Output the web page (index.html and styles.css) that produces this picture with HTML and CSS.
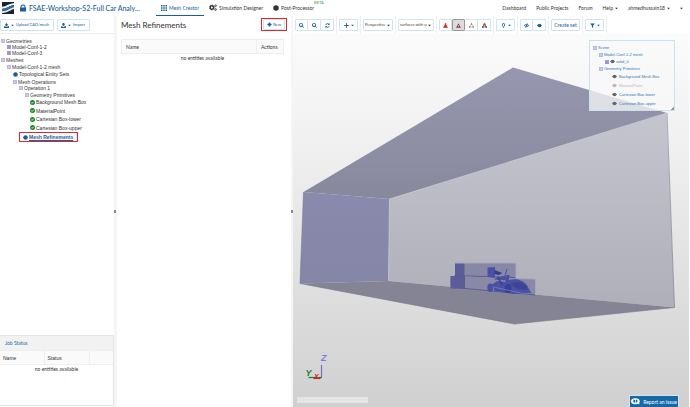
FILE: index.html
```html
<!DOCTYPE html>
<html lang="en">
<head>
<meta charset="utf-8">
<title>FSAE-Workshop-S2-Full Car Analysis</title>
<link rel="stylesheet" href="styles.css">
</head>
<body>
<svg class="symbols" aria-hidden="true">
  <symbol id="upload" viewBox="0 0 12 12"><path d="M6 0l4 5H8v3H4V5H2zM0 8h3v1h6V8h3v4H0z"/></symbol>
  <symbol id="download" viewBox="0 0 12 12"><path d="M4 0h4v3h2L6 8 2 3h2zM0 8h3l3 2 3-2h3v4H0z"/></symbol>
  <symbol id="magnify" viewBox="0 0 12 12"><path fill-rule="evenodd" d="M5 0a5 5 0 0 1 4 8l3 3-1 1-3-3A5 5 0 1 1 5 0zm0 2a3 3 0 1 0 0 6 3 3 0 0 0 0-6z"/><path d="M3 4.500h4v1H3z"/></symbol>
  <symbol id="refresh" viewBox="0 0 12 12"><path d="M1 5a5 5 0 0 1 8-3l2-2v5H6l2-2a3 3 0 0 0-5 2zM11 7a5 5 0 0 1-8 3l-2 2V7h5L4 9a3 3 0 0 0 5-2z"/></symbol>
  <symbol id="move" viewBox="0 0 12 12"><path d="M6 0l2 2H7v3h3V4l2 2-2 2V7H7v3h1l-2 2-2-2h1V7H2v1L0 6l2-2v1h3V2H4z"/></symbol>
  <symbol id="plus" viewBox="0 0 12 12"><path d="M4 1h4v3h3v4H8v3H4V8H1V4h3z"/></symbol>
  <symbol id="caret" viewBox="0 0 12 12"><path d="M0 3h12L6 9z"/></symbol>
  <symbol id="eye" viewBox="0 0 12 12"><path d="M0 6q6-8 12 0-6 8-12 0z"/><circle cx="6" cy="6" r="3"/></symbol>
  <symbol id="eye-off" viewBox="0 0 12 12"><path fill-rule="evenodd" d="M0 6q6-8 12 0-6 8-12 0zm2 0q4 5 8 0-4-5-8 0z"/><circle cx="6" cy="6" r="2"/><path d="M9 0h1L4 12H3z"/></symbol>
  <symbol id="bulb" viewBox="0 0 12 12"><path fill-rule="evenodd" d="M6 0a5 4.500 0 0 1 2 8v1H4V8a5 4.500 0 0 1 2-8zm0 1.500a3 3 0 0 0-1 5v1h2v-1a3 3 0 0 0-1-5zM4 10h4l-1 2H5z"/></symbol>
  <symbol id="filter" viewBox="0 0 12 12"><path d="M0 1h12L7.500 6v6l-3-2V6z"/></symbol>
  <symbol id="lock" viewBox="0 0 12 14"><path fill-rule="evenodd" d="M1 6V5a5 5 0 0 1 10 0v1h1v8H0V6zm2 0h6V5a3 3 0 0 0-6 0z"/></symbol>
  <symbol id="grid" viewBox="0 0 12 12"><path d="M0 0h3v3H0zM4.500 0h3v3h-3zM9 0h3v3H9zM0 4.500h3v3H0zM4.500 4.500h3v3h-3zM9 4.500h3v3H9zM0 9h3v3H0zM4.500 9h3v3h-3zM9 9h3v3H9z"/></symbol>
  <symbol id="gears" viewBox="0 0 14 12"><g fill="none" stroke="currentColor"><circle cx="5" cy="6" r="3" stroke-width="2.500"/><circle cx="5" cy="6" r="4.500" stroke-dasharray="2 1.500"/><circle cx="11.500" cy="3" r="1.500" stroke-width="1.500"/><circle cx="11.500" cy="9.500" r="1.500" stroke-width="1.500"/></g></symbol>
  <symbol id="dot" viewBox="0 0 12 12"><circle cx="6" cy="6" r="5.500"/></symbol>
  <symbol id="check" viewBox="0 0 12 12"><circle cx="6" cy="6" r="6"/><path d="M3 6l2 2 4-4" fill="none" stroke="#fff" stroke-width="2"/></symbol>
  <symbol id="minus-box" viewBox="0 0 12 12"><path d="M1 1h10v10H1zM3 6h6" fill="#eeeefb" stroke="#8a8dcc" stroke-width="2"/></symbol>
  <symbol id="plus-box" viewBox="0 0 12 12"><path d="M1 1h10v10H1zM3 6h6M6 3v6" fill="#dcdcf8" stroke="#5f62c6" stroke-width="2"/></symbol>
  <symbol id="tri" viewBox="0 0 14 12"><path d="M7 0l3 5H4z" fill="#444"/><path d="M4 5h6l4 7H0z" fill="#a33b3b"/><path d="M6 5h2v4H6z" fill="#eee"/></symbol>
  <symbol id="tri-red" viewBox="0 0 14 12"><path d="M5 0h4v4l5 8H0l5-8z" fill="#cf2525"/></symbol>
  <symbol id="tri-line" viewBox="0 0 14 12"><path d="M7 1l5 9H2z" fill="none" stroke="#999" stroke-width="1.500"/><circle cx="7" cy="2" r="2" fill="#c44"/><circle cx="2" cy="10" r="2" fill="#666"/><circle cx="12" cy="10" r="2" fill="#c44"/></symbol>
  <symbol id="tri-points" viewBox="0 0 14 12"><path d="M7 1l5 9H2z" fill="none" stroke="#444" stroke-width="2"/><circle cx="7" cy="3" r="3" fill="#d22"/><path d="M0 8h4v4H0zM10 8h4v4h-4z" fill="#444"/></symbol>
</svg>

<header class="topbar">
  <a class="brand" href="#" aria-label="Home">
    <svg class="logo" viewBox="0 0 36 36"><path d="M0 0h36v36H0z" fill="#17242f"/><path d="M0 14C12 15 18 5 36 4v5C22 10 16 20 0 20z" fill="#fff"/><path d="M0 21C14 21 20 12 36 10v5C24 17 18 26 0 27z" fill="#2b74b0"/><path d="M0 28C16 28 24 18 36 16v5C26 23 20 32 0 33z" fill="#e8edf1"/></svg>
  </a>
  <svg class="lock"><use href="#lock"/></svg>
  <h1 class="project">FSAE-Workshop-S2-Full Car Analy...</h1>
  <nav class="tabs">
    <a class="tab active" href="#"><svg class="icon m"><use href="#grid"/></svg>Mesh Creator</a>
    <a class="tab" href="#"><svg class="icon l"><use href="#gears"/></svg>Simulation Designer</a>
    <a class="tab" href="#"><svg class="icon m"><use href="#dot"/></svg>Post-Processor<sup class="beta">BETA</sup></a>
  </nav>
  <nav class="links">
    <a href="#">Dashboard</a><a href="#">Public Projects</a><a href="#">Forum</a>
    <a href="#">Help <svg class="icon c"><use href="#caret"/></svg></a>
    <a href="#">ahmedhussain18 <svg class="icon c"><use href="#caret"/></svg></a>
    <a href="#" aria-label="More"><svg class="icon c"><use href="#caret"/></svg></a>
  </nav>
</header>

<main class="workspace">
  <aside class="sidebar">
    <div class="actions">
      <button class="btn"><svg class="icon s"><use href="#upload"/></svg><svg class="icon c"><use href="#caret"/></svg>Upload CAD/mesh</button>
      <button class="btn"><svg class="icon s"><use href="#download"/></svg><svg class="icon c"><use href="#caret"/></svg>Import</button>
    </div>
    <ul class="tree">
      <li><div class="node"><svg class="icon t"><use href="#minus-box"/></svg>Geometries</div>
        <ul>
          <li class="node small"><svg class="icon t"><use href="#plus-box"/></svg>Model-Conf-1-2</li>
          <li class="node small"><svg class="icon t"><use href="#plus-box"/></svg>Model-Conf-3</li>
        </ul></li>
      <li><div class="node"><svg class="icon t"><use href="#minus-box"/></svg>Meshes</div>
        <ul>
          <li><div class="node"><svg class="icon t"><use href="#minus-box"/></svg>Model-Conf-1-2 mesh</div>
            <ul>
              <li class="node leaf blue"><svg class="icon s"><use href="#dot"/></svg><span>Topological Entity Sets</span></li>
              <li><div class="node"><svg class="icon t"><use href="#minus-box"/></svg>Mesh Operations</div>
                <ul>
                  <li><div class="node small"><svg class="icon t"><use href="#minus-box"/></svg>Operation 1</div>
                    <ul>
                      <li><div class="node"><svg class="icon t"><use href="#minus-box"/></svg>Geometry Primitives</div>
                        <ul class="primitives">
                          <li class="node"><svg class="icon s"><use href="#check"/></svg>Background Mesh Box</li>
                          <li class="node"><svg class="icon s"><use href="#check"/></svg>MaterialPoint</li>
                          <li class="node"><svg class="icon s"><use href="#check"/></svg>Cartesian Box-lower</li>
                          <li class="node"><svg class="icon s"><use href="#check"/></svg>Cartesian Box-upper</li>
                        </ul></li>
                    </ul></li>
                </ul></li>
            </ul></li>
        </ul></li>
    </ul>
    <a class="selected marked" href="#"><svg class="icon s"><use href="#dot"/></svg><span>Mesh Refinements</span></a>
    <section class="jobs">
      <h2>Job Status</h2>
      <table>
        <thead><tr><th>Name</th><th>Status</th><th aria-label="Actions"></th></tr></thead>
        <tbody><tr><td colspan="3">no entities available</td></tr></tbody>
      </table>
    </section>
  </aside>
  <div class="splitter"><i></i></div>

  <section class="detail">
    <div class="detail-head">
      <h2>Mesh Refinements</h2>
      <div class="marked new"><button class="btn"><svg class="icon s"><use href="#plus"/></svg>New</button></div>
    </div>
    <table>
      <thead><tr><th>Name</th><th class="act">Actions</th></tr></thead>
      <tbody><tr><td colspan="2">no entities available</td></tr></tbody>
    </table>
  </section>
  <div class="splitter"><i></i></div>

  <section class="viewer">
    <div class="toolbar">
      <div class="tool"><div class="group">
        <button class="btn" aria-label="Zoom to fit"><svg class="icon s"><use href="#magnify"/></svg></button>
        <button class="btn" aria-label="Zoom to area"><svg class="icon s"><use href="#magnify"/></svg></button>
        <button class="btn" aria-label="Reset view"><svg class="icon s"><use href="#refresh"/></svg></button>
      </div></div>
      <div class="tool"><button class="btn drop" aria-label="Orientation"><svg class="icon s"><use href="#move"/></svg><svg class="icon c"><use href="#caret"/></svg></button></div>
      <div class="tool"><div class="pick"><select class="proj" aria-label="Projection"><option>Perspective</option></select><svg class="icon c"><use href="#caret"/></svg></div></div>
      <div class="tool"><div class="pick"><select class="surf" aria-label="Render mode"><option>surfaces with edges</option></select><svg class="icon c"><use href="#caret"/></svg></div></div>
      <div class="tool"><div class="group">
        <button class="btn" aria-label="Pick volumes"><svg class="icon s"><use href="#tri-red"/></svg></button>
        <button class="btn on" aria-label="Pick faces"><svg class="icon s"><use href="#tri"/></svg></button>
        <button class="btn" aria-label="Pick edges"><svg class="icon s"><use href="#tri-line"/></svg></button>
        <button class="btn" aria-label="Pick points"><svg class="icon s"><use href="#tri-points"/></svg></button>
      </div></div>
      <div class="tool"><button class="btn drop" aria-label="Highlight"><svg class="icon s"><use href="#bulb"/></svg><svg class="icon c"><use href="#caret"/></svg></button></div>
      <div class="tool"><div class="group">
        <button class="btn" aria-label="Hide"><svg class="icon s"><use href="#eye-off"/></svg></button>
        <button class="btn" aria-label="Show"><svg class="icon s"><use href="#eye"/></svg></button>
      </div></div>
      <div class="tool"><button class="btn create">Create set</button></div>
      <div class="tool"><button class="btn drop" aria-label="Filter"><svg class="icon s"><use href="#filter"/></svg><svg class="icon c"><use href="#caret"/></svg></button></div>
    </div>
    <div class="canvas">
      <svg class="model" viewBox="293 34 397 373" preserveAspectRatio="xMidYMid slice" role="img" aria-label="Car inside wind tunnel box">
        <defs>
          <linearGradient id="back" x2="0" y2="1"><stop stop-color="#c5c5cf"/><stop offset="1" stop-color="#afafb9"/></linearGradient>
          <linearGradient id="roof" x2="0" y2="1"><stop stop-color="#9696af"/><stop offset="1" stop-color="#88889d"/></linearGradient>
          <linearGradient id="side" x2="0" y2="1"><stop stop-color="#8a8aae"/><stop offset="1" stop-color="#8585a6"/></linearGradient>
        </defs>
        <path d="M390 199L667 113 675 307.500 389 281z" fill="url(#back)"/>
        <path d="M304 192L513.500 67.500 667.500 113 390 199z" fill="url(#roof)"/>
        <path d="M304 192L390 199 389 281 300.500 283.500z" fill="url(#side)"/>
        <path d="M300.500 283.500L389 281 675 307.500 515 324z" fill="#848494"/>
        <path d="M667.500 113L675 307.500 515 324 300.500 283.500 304 192" fill="none" stroke="#777789" stroke-width=".6"/>
        <path d="M389 281L390 199 667 113" fill="none" stroke="#d0d0d8" stroke-width=".6"/>
        <path d="M455.500 263H516.500V278L455.500 276z" fill="#8888a6"/>
        <path d="M451 276L536 279V295L451 289z" fill="#8989a7"/>
        <path d="M455.500 263H465V276H455.500zM451 276H465V289L451 288.500z" fill="#5c5c99"/>
        <path d="M455 275.500L516 277.500M465 288.500L536 295M465 276V289" fill="none" stroke="#5b5b8c"/>
        <path d="M455.500 263H516.500V278M516.500 278.500L536 279V295" fill="none" stroke="#a8a8ba"/>
        <g fill="#4a51a5">
          <path d="M488 267.500L495.500 267V278L488 277z"/><path d="M495 270l5 2 3 1-4 2-4-1z" fill="#343b8f"/>
          <path d="M496 278l9-2 2-7 1-0.500-2 8 1 4-12-1zM507 275h3l-1 7h-3z"/>
          <path d="M493 284l5-3 8 1 3-2 8-1q8 2 11 7l2 4 2 3-18 1-19-3z"/>
          <ellipse cx="490.800" cy="287.700" rx="3" ry="4.200"/>
          <ellipse cx="508.500" cy="288.500" rx="3.500" ry="4.500" fill="#373f94"/>
          <path d="M511 284q8-5 16 2l1 4-10-1z" fill="#3c4496"/>
          <path d="M494 287l32 7 4-1" fill="none" stroke="#777dc0" stroke-width=".8"/>
          <path d="M498 277l5 8" fill="none" stroke="#343b8f" stroke-width="1.200"/>
        </g>
        <path d="M322 378V365" stroke="#7676bd" stroke-width="1.200"/><path d="M309 377.500H322" stroke="#16842a" stroke-width="1.200"/><path d="M314 378.500h7" stroke="#d22" stroke-width="1.200"/>
        <text class="axis z" x="321.500" y="361">Z</text><text class="axis y" x="306" y="376">Y</text><text class="axis x" x="314.500" y="379">X</text>
      </svg>
      <div class="scene">
        <ul>
          <li><div class="item"><svg class="icon t"><use href="#minus-box"/></svg>Scene</div>
            <ul>
              <li><div class="item"><svg class="icon t"><use href="#minus-box"/></svg>Model-Conf-1-2 mesh</div>
                <ul><li class="item"><svg class="icon t"><use href="#plus-box"/></svg><svg class="icon s eye"><use href="#eye"/></svg>solid_0</li></ul></li>
              <li><div class="item"><svg class="icon t"><use href="#minus-box"/></svg>Geometry Primitives</div>
                <ul class="parts">
                  <li class="item"><svg class="icon s eye"><use href="#eye"/></svg>Background Mesh Box</li>
                  <li class="item off"><svg class="icon s eye"><use href="#eye"/></svg>MaterialPoint</li>
                  <li class="item"><svg class="icon s eye"><use href="#eye"/></svg>Cartesian Box-lower</li>
                  <li class="item"><svg class="icon s eye"><use href="#eye"/></svg>Cartesian Box-upper</li>
                </ul></li>
            </ul></li>
        </ul>
      </div>
      <div class="console"></div>
      <button class="report"><svg class="chat" viewBox="0 0 27 20"><ellipse cx="13" cy="9" rx="13" ry="9" fill="#fff"/><path d="M16 14l10 5-3-8z" fill="#fff"/><path d="M7 5h5v8H7zM14 5h5v8h-5z" fill="#1768a6"/></svg>Report an issue</button>
    </div>
  </section>
</main>
</body>
</html>
```
FILE: styles.css
```css
* { box-sizing: border-box; }
body {
  margin: 0;
  min-height: 100vh;
  display: flex;
  flex-direction: column;
  background: #fff;
  color: #333;
  font: 5px/6px Lato, "Liberation Sans", sans-serif;
}
h1, h2, ul { margin: 0; padding: 0; font-weight: normal; }
ul { list-style: none; }
a { color: inherit; text-decoration: none; }
.symbols { position: absolute; width: 0; height: 0; }
.icon { flex: none; fill: currentColor; width: 5px; height: 5px; }
.icon.t { width: 4px; height: 4px; }
.icon.m { width: 6px; height: 6px; }
.icon.l { width: 8px; height: 7px; }
.icon.c { width: 3px; height: 3px; }

.topbar { display: flex; align-items: center; height: 16px; padding-left: 2px; flex: none; }
.brand, .logo { display: block; width: 12px; height: 12px; }
.lock { width: 6px; height: 8px; margin: 0 3px 0 6px; fill: #17609b; }
.project { font-size: 7px; line-height: 12px; width: 127px; font-weight: 500; white-space: nowrap; color: #17609b; }
.tabs { display: flex; align-self: stretch; }
.tab { display: flex; align-items: center; gap: 2px; padding: 0 5px; border-bottom: 1px solid transparent; white-space: nowrap; }
.tab.active { color: #17609b; border-color: #17609b; }
.beta { align-self: flex-start; color: #3b9c3b; font-size: 4px; line-height: 6px; margin-left: -2px; }
.links { display: flex; gap: 10px; margin-left: auto; padding-right: 7px; white-space: nowrap; }
.links a { display: flex; align-items: center; gap: 2px; }

.workspace { flex: 1; display: grid; grid-template-columns: 114px 3px 174px 2px minmax(0, 1fr); }
.splitter { display: flex; align-items: center; background: #f5f5f5; }
.splitter i { width: 2px; height: 3px; background: #888; }

.btn {
  display: inline-flex; align-items: center; justify-content: center; gap: 2px;
  height: 12px; padding: 0 3px; background: #fff; color: #17609b;
  border: 1px solid #d0e4ef; border-radius: 1px; font: inherit; white-space: nowrap;
}
.sidebar { display: flex; flex-direction: column; align-items: stretch; }
.actions { display: flex; gap: 3px; padding: 3px 0 2px; border-bottom: 1px solid #eee; margin-bottom: 3px; font-size: 4px; }
.actions .btn { padding: 0 4px 0 3px; }
.tree, .selected { font-family: "Liberation Sans", sans-serif; }
.tree ul { padding-left: 6px; }
.node { display: flex; align-items: center; gap: 1px; height: 7px; white-space: nowrap; }
.node.small { height: 6px; }
.node.leaf { height: 8px; }
.tree .primitives { display: grid; grid-auto-rows: 1fr; height: 34px; padding-left: 5px; }
.primitives .node { height: auto; }
.primitives .icon { color: #168a26; }
.blue .icon { color: #17609b; }
.tree > li { padding-left: 1px; }
.marked { border: 1px solid #e8242a; }
.selected { display: flex; align-items: center; gap: 1px; height: 10px; margin: 0 auto 0 19px; padding: 0 4px 0 3px; color: #17609b; font-weight: bold; }
.selected span { text-decoration: underline; }

table { width: 100%; border-collapse: collapse; table-layout: fixed; }
th { height: 14px; padding: 0 4px; text-align: left; font-weight: normal; background: #fafafa; border: 1px solid #eee; }
td { padding: 1px 0; text-align: center; }
.jobs { height: 71px; margin-top: auto; margin-bottom: 1px; border: 1px solid #e5e5e5; border-left: 0; }
.jobs h2 { font-size: 5px; line-height: 14px; padding-left: 5px; color: #1f6fab; background: #f2f2f2; }
.jobs th { padding-left: 3px; font-family: "Liberation Sans", sans-serif; border-left: 0; }
.jobs th:first-child { width: 44px; }
.jobs th:last-child { width: 24px; border-right: 0; }

.detail { padding: 0 7px 0 4px; }
.detail-head { display: flex; align-items: center; justify-content: space-between; height: 17px; margin: 0 -3px 6px 0; }
.detail-head h2 { font-size: 8px; line-height: 10px; }
.new { display: flex; padding: 0 1px; font-size: 4px; }
.new .btn { height: 11px; width: 22px; padding: 0; gap: 1px; }
.act { width: 27px; }

.viewer { display: flex; flex-direction: column; }
.toolbar { display: flex; height: 18px; }
.tool { display: flex; align-items: center; padding: 0 2px; border-right: 1px solid #eee; }
.group { display: flex; }
.group .btn { width: 13px; padding: 0; }
.group .btn + .btn { border-left: 0; }
.drop { width: 19px; padding: 0; }
.create { width: 29px; padding: 0; }
.group .btn.on { background: #dcdcdc; border: 1px solid #999; }
.pick { display: grid; grid-template-columns: 1fr 6px; align-items: center; font-size: 4px; }
.pick select {
  grid-area: 1 / 1 / 2 / 3; appearance: none; height: 12px; padding: 0 6px 0 1px;
  border: 1px solid #d0e4ef; border-radius: 1px; background: #fff; color: #444; font: inherit;
}
.pick .icon { grid-area: 1 / 2; pointer-events: none; }
.proj { width: 30px; }
.surf { width: 36px; }

.canvas { position: relative; flex: 1; margin-right: 1px; background: linear-gradient(#fbfbfb, #eee 35%, #d0d0d0); }
.model { position: absolute; inset: 0; width: 100%; height: 100%; }
.axis { font: italic bold 9px "Liberation Sans", sans-serif; }
.axis.z { fill: #7b7bea; }
.axis.y { fill: #16842a; }
.axis.x { fill: #d22; font-size: 7px; }
.scene {
  position: absolute; top: 6px; right: 14px; width: 86px; height: 71px; padding: 3px;
  background: rgba(248, 248, 250, .75); border: 1px solid #cbe2ee;
  color: #2f78ae; font: 4px/5px "Liberation Sans", sans-serif;
}
.scene::after {
  content: ""; position: absolute; right: 0; bottom: 0; width: 4px; height: 4px;
  background: linear-gradient(135deg, transparent 60%, #999 60%);
}
.scene ul ul { padding-left: 6px; }
.item { display: flex; align-items: center; gap: 1px; height: 7px; white-space: nowrap; }
.scene .parts { padding-left: 13px; }
.parts .item { height: 9px; gap: 2px; }
.eye { color: #666; }
.off, .off .eye { color: #bbb; }
.console { position: absolute; left: 4px; bottom: 4px; width: 71px; height: 6px; background: #e5e5e5; }
.report {
  position: absolute; right: 10px; bottom: 0; display: flex; align-items: center; justify-content: center; gap: 3px;
  width: 50px; height: 12px; padding: 0; border: 1px solid #d9e3ea; border-bottom: 0; background: #1768a6; color: #fff; font: inherit; white-space: nowrap;
}
.chat { width: 9px; height: 7px; }
```
